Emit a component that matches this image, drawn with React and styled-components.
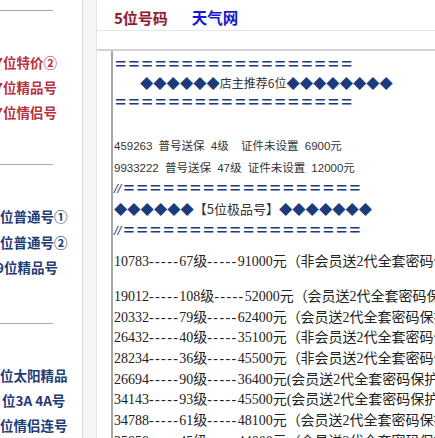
import React from "react";
import styled, { createGlobalStyle } from "styled-components";

const Global = createGlobalStyle`
  html, body { margin: 0; padding: 0; background: #fff; }
  body { width: 435px; height: 438px; overflow: hidden; }
`;

const CJK = `"Noto Sans CJK SC", sans-serif`;
const SERIF = `"Liberation Serif", "Noto Sans CJK SC", serif`;

const Page = styled.div`
  display: flex;
  width: 435px;
  height: 438px;
  overflow: hidden;
  background: #fff;
`;

const Sidebar = styled.div`
  width: 82px;
  flex: none;
  border-right: 1px solid #dcdcdc;
  display: flex;
  flex-direction: column;
  overflow: hidden;
`;

const Sep = styled.div`
  width: 53px;
  height: 1px;
  flex: none;
  background: #a9a9a9;
  margin-top: ${(p) => p.$top}px;
`;

const NavList = styled.div`
  display: flex;
  flex-direction: column;
  flex: none;
  margin-top: ${(p) => p.$top}px;
`;

const NavItem = styled.div`
  font-family: ${CJK};
  font-weight: 700;
  font-size: 13.5px;
  line-height: ${(p) => p.$lh}px;
  height: ${(p) => p.$lh}px;
  white-space: nowrap;
  color: ${(p) => (p.$red ? "#b8323f" : "#1d3c78")};
  margin-left: ${(p) => p.$shift || 0}px;
`;

const Gutter = styled.div`
  width: 13px;
  flex: none;
  background: #f6f6f8;
  border-right: 1px solid #e4e4e4;
`;

const Main = styled.div`
  flex: 1;
  min-width: 0;
  display: flex;
  flex-direction: column;
  overflow: hidden;
`;

const Header = styled.div`
  height: 26px;
  padding-top: 4px;
  padding-left: 17px;
  display: flex;
  align-items: center;
  gap: 24px;
  border-bottom: 1px solid #e6e6e6;
`;

const Tab = styled.span`
  font-family: ${CJK};
  font-weight: 700;
  font-size: ${(p) => (p.$blue ? 15.5 : 15)}px;
  color: ${(p) => (p.$blue ? "#1818cc" : "#8a1e33")};
  text-shadow: ${(p) => (p.$blue ? "none" : "0 0 3px #f6dce0")};
  white-space: nowrap;
`;

const Band = styled.div`
  height: 18px;
  border-bottom: 2px solid #d2d2d2;
`;

const Box = styled.div`
  flex: 1;
  margin-left: 14px;
  border-left: 2px solid #a6a6a6;
  padding-left: 1px;
  padding-top: 3px;
  overflow: hidden;
`;

const Line = styled.div`
  height: ${(p) => p.$h}px;
  line-height: ${(p) => p.$h}px;
  margin-top: ${(p) => p.$mt || 0}px;
  padding-left: ${(p) => p.$indent || 0}px;
  white-space: nowrap;
`;

const Eq = styled.span`
  font-family: ${CJK};
  font-weight: 900;
  font-size: 13.3px;
  color: #1c3b7c;
`;

const Slash = styled.span`
  font-family: "Liberation Sans", sans-serif;
  font-size: 13px;
  color: #1c3b7c;
  font-style: italic;
  margin-right: 1px;
`;

const Dia = styled.span`
  font-family: ${CJK};
  font-size: 13.3px;
  color: #1c3b7c;
`;

const Label = styled.span`
  font-family: ${CJK};
  font-size: ${(p) => p.$size || 12}px;
  color: #333;
`;

const Small = styled.span`
  font-family: "Liberation Sans", ${CJK};
  font-size: 11.5px;
  color: #333;
  word-spacing: 3px;
`;

const Row = styled.div`
  font-family: ${SERIF};
  font-size: 14px;
  color: #222;
  height: ${(p) => p.$h || 20.7}px;
  line-height: ${(p) => p.$h || 20.7}px;
  margin-top: ${(p) => p.$mt || 0}px;
  white-space: nowrap;
`;

const Dash = styled.span`
  letter-spacing: 1.4px;
`;

const rows = [
  ["19012", "108", "52000", "（会员送2代全套密码保护）"],
  ["20332", "79", "62400", "（会员送2代全套密码保护）"],
  ["26432", "40", "35100", "（非会员送2代全套密码保护）"],
  ["28234", "36", "45500", "（非会员送2代全套密码保护）"],
  ["26694", "90", "36400", "(会员送2代全套密码保护)"],
  ["34143", "93", "45500", "(会员送2代全套密码保护)"],
  ["34788", "61", "48100", "（会员送2代全套密码保护）"],
  ["35858", "45", "44800", "（会员送2代全套密码保护）"],
];

const eqs = "＝".repeat(18);

function Price({ d }) {
  return (
    <>
      {d[0]}
      <Dash>-----</Dash>
      {d[1]}级<Dash>-----</Dash>
      {d[2]}元{d[3]}
    </>
  );
}

export default function App() {
  return (
    <>
      <Global />
      <Page>
        <Sidebar>
          <Sep $top={10} />
          <NavList $top={39}>
            <NavItem $red $lh={25} $shift={-5}>7位特价②</NavItem>
            <NavItem $red $lh={25} $shift={-5}>7位精品号</NavItem>
            <NavItem $red $lh={25} $shift={-5}>7位情侣号</NavItem>
          </NavList>
          <Sep $top={39} />
          <NavList $top={39}>
            <NavItem $lh={25.5}>位普通号①</NavItem>
            <NavItem $lh={25.5}>位普通号②</NavItem>
            <NavItem $lh={25.5} $shift={-4}>9位精品号</NavItem>
          </NavList>
          <Sep $top={42} />
          <NavList $top={39}>
            <NavItem $lh={25}>位太阳精品</NavItem>
            <NavItem $lh={25} $shift={2}>位3A 4A号</NavItem>
            <NavItem $lh={25}>位情侣连号</NavItem>
          </NavList>
        </Sidebar>
        <Gutter />
        <Main>
          <Header>
            <Tab>5位号码</Tab>
            <Tab $blue>天气网</Tab>
          </Header>
          <Band />
          <Box>
            <Line $h={19}>
              <Eq>{eqs}</Eq>
            </Line>
            <Line $h={19} $indent={26}>
              <Dia>◆◆◆◆◆◆</Dia>
              <Label>店主推荐6位</Label>
              <Dia>◆◆◆◆◆◆◆◆</Dia>
            </Line>
            <Line $h={19}>
              <Eq>{eqs}</Eq>
            </Line>
            <Line $h={22} $mt={23}>
              <Small>459263 普号送保 4级&nbsp; 证件未设置 6900元</Small>
            </Line>
            <Line $h={22}>
              <Small>9933222 普号送保 47级 证件未设置 12000元</Small>
            </Line>
            <Line $h={20}>
              <Slash>//</Slash>
              <Eq>{eqs}</Eq>
            </Line>
            <Line $h={21}>
              <Dia>◆◆◆◆◆◆</Dia>
              <Label $size={13}>【5位极品号】</Label>
              <Dia>◆◆◆◆◆◆◆</Dia>
            </Line>
            <Line $h={21}>
              <Slash>//</Slash>
              <Eq>{eqs}</Eq>
            </Line>
            <Row $h={22} $mt={11}>
              <Price d={["10783", "67", "91000", "（非会员送2代全套密码保护）"]} />
            </Row>
            {rows.map((r, i) => (
              <Row key={i} $mt={i === 0 ? 14 : 0}>
                <Price d={r} />
              </Row>
            ))}
          </Box>
        </Main>
      </Page>
    </>
  );
}
